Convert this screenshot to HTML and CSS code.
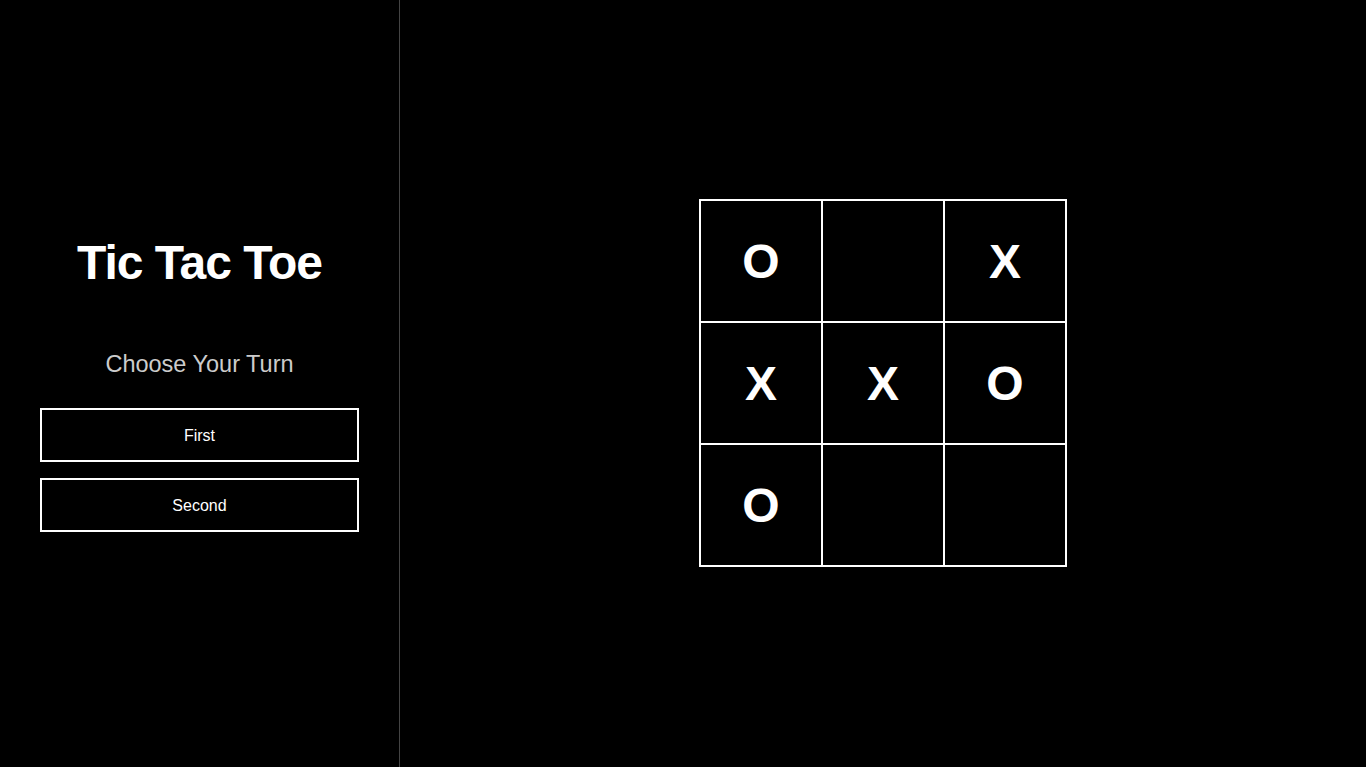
FILE: index.html
```html
<!DOCTYPE html>
<html lang="en">
<head>
<meta charset="utf-8">
<title>Tic Tac Toe</title>
<link rel="stylesheet" href="styles.css">
</head>
<body>
<div class="app">
  <aside class="sidebar">
    <h1 class="title">Tic Tac Toe</h1>
    <p class="subtitle">Choose Your Turn</p>
    <div class="choices">
      <button class="choice">First</button>
      <button class="choice">Second</button>
    </div>
  </aside>
  <main class="stage">
    <div class="board">
      <div class="cell">O</div>
      <div class="cell"></div>
      <div class="cell">X</div>
      <div class="cell">X</div>
      <div class="cell">X</div>
      <div class="cell">O</div>
      <div class="cell">O</div>
      <div class="cell"></div>
      <div class="cell"></div>
    </div>
  </main>
</div>
</body>
</html>
```
FILE: styles.css
```css
* { box-sizing: border-box; }
html, body {
  margin: 0;
  padding: 0;
  height: 100%;
  background: #000;
  color: #fff;
  font-family: "Liberation Sans", Arial, sans-serif;
}
.app {
  display: flex;
  height: 100vh;
}
.sidebar {
  width: 400px;
  flex: 0 0 400px;
  border-right: 1px solid #444;
  padding: 0 40px 0 40px;
  display: flex;
  flex-direction: column;
  justify-content: center;
  align-items: stretch;
  text-align: center;
}
.title {
  margin: 0;
  font-size: 48px;
  font-weight: bold;
  letter-spacing: -1px;
  line-height: 55px;
  color: #fff;
}
.subtitle {
  margin: 60px 0 30px;
  font-size: 23.5px;
  line-height: 28px;
  color: #ccc;
}
.choices {
  display: flex;
  flex-direction: column;
  gap: 16px;
}
.choice {
  height: 54px;
  width: 100%;
  padding: 1px 0 0;
  background: #000;
  color: #fff;
  border: 2px solid #fff;
  font-family: "Liberation Sans", Arial, sans-serif;
  font-size: 16px;
  cursor: pointer;
}
.stage {
  flex: 1;
  display: flex;
  align-items: center;
  justify-content: center;
}
.board {
  display: grid;
  grid-template-columns: repeat(3, 122px);
  grid-template-rows: repeat(3, 122px);
  border: 1px solid #fff;
  margin-bottom: 1px;
}
.cell {
  border: 1px solid #fff;
  display: flex;
  align-items: center;
  justify-content: center;
  font-size: 48px;
  font-weight: bold;
  line-height: 55px;
}
```
